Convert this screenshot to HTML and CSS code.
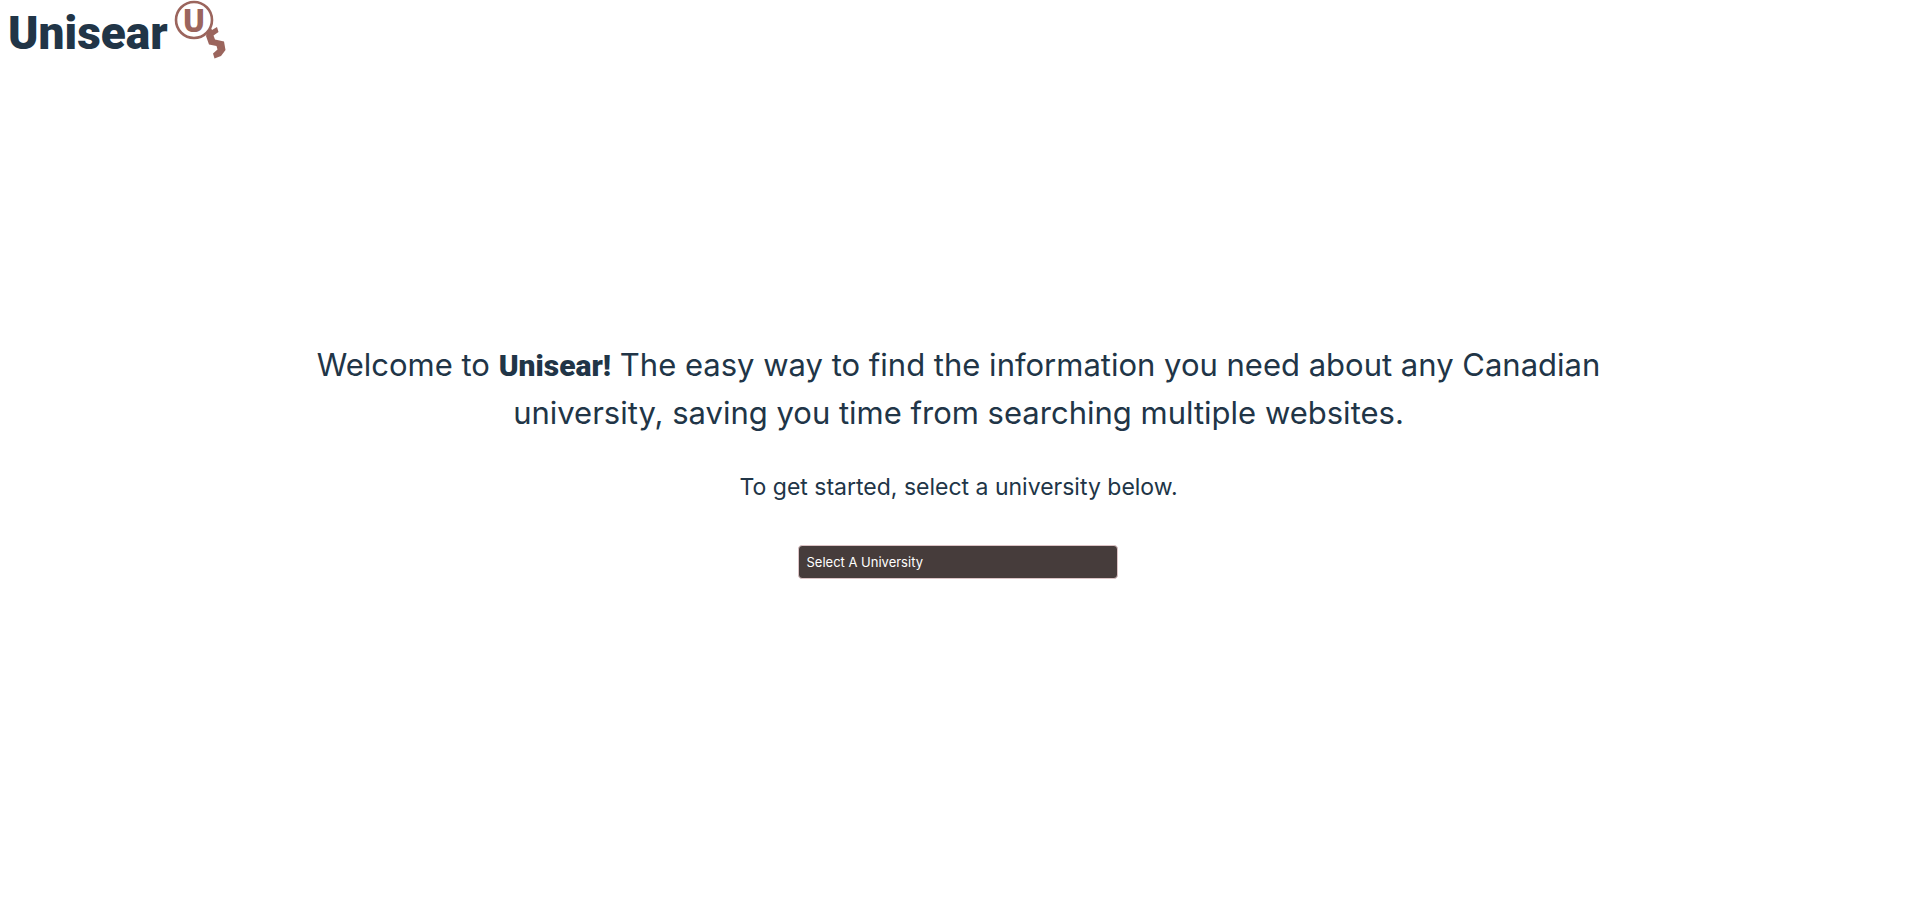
FILE: index.html
```html
<!DOCTYPE html>
<html lang="en">
<head>
<meta charset="utf-8">
<title>Unisear</title>
<link rel="stylesheet" href="styles.css">
</head>
<body>
<header class="header">
  <a class="brand" href="#">
    <span class="wordmark">Unisear</span>
    <svg class="emblem" viewBox="0 0 52 60" aria-hidden="true">
      <circle cx="20" cy="20" r="18" fill="none" stroke="#9b655d" stroke-width="2.6"/>
      <text class="emblem-letter" x="20" y="32" text-anchor="middle">U</text>
      <path d="M33 33L37 28L38 30L43 27L44.500 32L39.500 35.500L41 39.500L50 41.500L51.500 50L47 56L40.500 58.500L39 53.500L43.500 49.500L42.500 46L35 44.500L32 36Z" fill="#9b655d"/>
    </svg>
  </a>
</header>
<main class="main">
  <h1 class="intro">Welcome to <strong class="name">Unisear!</strong> The easy way to find the information you need about any Canadian university, saving you time from searching multiple websites.</h1>
  <label class="prompt" for="university">To get started, select a university below.</label>
  <select class="picker" id="university">
    <option>Select A University</option>
  </select>
</main>
</body>
</html>
```
FILE: styles.css
```css
* { box-sizing: border-box; }

body {
  margin: 0;
  min-height: 100vh;
  display: flex;
  flex-direction: column;
  background: #fff;
  color: #213547;
  font-family: Inter, "Open Sans", sans-serif;
}

.header { display: flex; }

.brand {
  display: flex;
  align-items: flex-start;
  gap: 6px;
  padding-left: 8px;
  color: inherit;
  text-decoration: none;
}

.wordmark {
  font-family: Roboto, sans-serif;
  font-size: 46px;
  line-height: 66px;
  font-weight: 900;
}

.emblem { width: 52px; height: 60px; }

.emblem-letter {
  fill: #9b655d;
  font-family: "DejaVu Sans Condensed", Roboto, sans-serif;
  font-size: 32px;
  font-weight: 700;
}

.main {
  display: flex;
  flex-direction: column;
  align-items: center;
  width: 70%;
  margin: 0 auto;
  padding-top: 275px;
}

.intro {
  margin: 0;
  font-size: 31px;
  line-height: 48px;
  font-weight: 400;
  text-align: center;
}

.name {
  font-family: Roboto, sans-serif;
  font-size: 30px;
  line-height: 1;
  font-weight: 900;
}

.prompt {
  margin-top: 32px;
  font-size: 23px;
  line-height: 36px;
}

.picker {
  appearance: none;
  width: 320px;
  height: 34px;
  margin-top: 40px;
  padding: 0 7px;
  border: 1px solid #dcc3c5;
  border-radius: 4px;
  background: #463c3b;
  color: #fff;
  font-family: inherit;
  font-size: 13px;
}
```
